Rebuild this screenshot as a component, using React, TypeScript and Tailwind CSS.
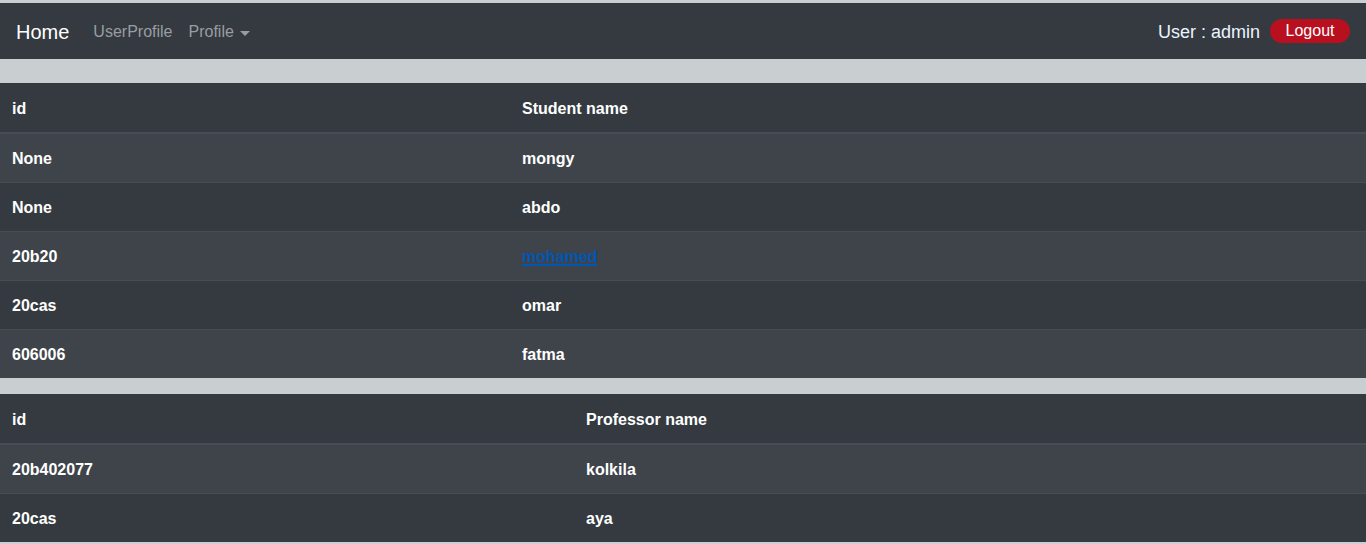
import React from "react";

const students = [
  ["None", "mongy"],
  ["None", "abdo"],
  ["20b20", "mohamed"],
  ["20cas", "omar"],
  ["606006", "fatma"],
];
const profs = [
  ["20b402077", "kolkila"],
  ["20cas", "aya"],
];

function Table({ head, rows, firstW, linkRow }: { head: string; rows: string[][]; firstW: string; linkRow?: number }) {
  return (
    <table className="w-full border-collapse text-white text-[16px] font-bold leading-6">
      <thead>
        <tr className="bg-[#343a40]">
          <th className={`${firstW} text-left px-3 pt-[13px] pb-[11px] align-bottom border-t border-t-[#343a40] border-b-2 border-b-[#454d55]`}>id</th>
          <th className="text-left px-3 pt-[13px] pb-[11px] align-bottom border-t border-t-[#343a40] border-b-2 border-b-[#454d55]">{head}</th>
        </tr>
      </thead>
      <tbody>
        {rows.map((r, i) => (
          <tr key={i} className={i % 2 === 0 ? "bg-[#3e444a]" : "bg-[#343a40]"}>
            <td className="px-3 pt-[13px] pb-[11px] border-t border-[#454d55]">{r[0]}</td>
            <td className="px-3 pt-[13px] pb-[11px] border-t border-[#454d55]">
              {linkRow === i ? (
                <a className="text-[#0056b3] underline decoration-[2px] underline-offset-[2px]" href="#">{r[1]}</a>
              ) : (
                r[1]
              )}
            </td>
          </tr>
        ))}
      </tbody>
    </table>
  );
}

export default function App() {
  return (
    <div className="bg-[#c9ced1] min-h-[544px] pt-[3px] pb-px" style={{ fontFamily: '"Liberation Sans", Arial, sans-serif' }}>
      <nav className="bg-[#343a40] h-[56px] px-4 pt-[2px] flex items-center justify-between">
        <div className="flex items-center">
          <span className="text-white text-[20px] mr-4">Home</span>
          <span className="text-[#9a9da0] text-[16px] px-2">UserProfile</span>
          <span className="text-[#9a9da0] text-[16px] px-2 flex items-center">
            Profile
            <span className="ml-[6px] mt-[2px] inline-block w-0 h-0 border-t-[5px] border-t-[#9a9da0] border-x-[5px] border-x-transparent"></span>
          </span>
        </div>
        <div className="flex items-center">
          <span className="text-[#eaf4ff] text-[18px] mr-[10px]">User : admin</span>
          <span className="bg-[#b8101f] text-white text-[16px] rounded-full w-[80px] h-[24px] -mt-[2px] flex items-center justify-center leading-none">Logout</span>
        </div>
      </nav>
      <div className="h-[24px]"></div>
      <Table head="Student name" rows={students} firstW="w-[510px]" linkRow={2} />
      <div className="h-[16px]"></div>
      <Table head="Professor name" rows={profs} firstW="w-[574px]" />
    </div>
  );
}
